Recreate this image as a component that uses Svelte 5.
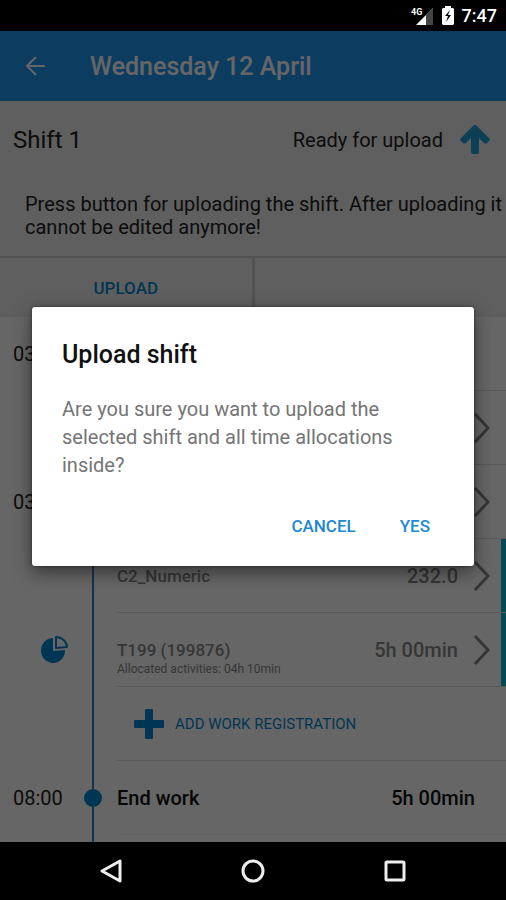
<script>
  let open = true;

  const rows = [
    { time: "03:00" },
    { chevron: true },
    { time: "03:00", chevron: true },
    { label: "C2_Numeric", value: "232.0", chevron: true, marked: true },
    {
      label: "T199 (199876)",
      note: "Allocated activities: 04h 10min",
      value: "5h 00min",
      chevron: true,
      marked: true,
      pie: true,
    },
    { add: true },
    { time: "08:00", label: "End work", value: "5h 00min", strong: true },
  ];

  function close() {
    open = false;
  }
</script>

<div class="device">
  <div class="status">
    <svg width="24" height="20" viewBox="0 0 24 20">
      <path d="M22 2v17H5z" fill="#fff" />
      <path d="M15 8l7-6v17h-7z" fill="#444" />
      <text x="0" y="9" font-size="9" font-weight="700" fill="#fff">4G</text>
    </svg>
    <svg class="battery" width="12" height="19" viewBox="0 0 12 19">
      <path d="M3 2V0h6v2h2l1 1v15l-1 1H1l-1-1V3l1-1z" fill="#fff" />
      <path d="M8 4l-5 6h3l-2 6 5-7H6z" fill="#000" />
    </svg>
    <span>7:47</span>
  </div>

  <div class="screen">
    <header>
      <button class="back" aria-label="Back">
        <svg width="20" height="20" viewBox="0 0 20 20">
          <path
            d="M20 10H2M11 1L2 10l9 9"
            fill="none"
            stroke="currentColor"
            stroke-width="2"
          />
        </svg>
      </button>
      <h1>Wednesday 12 April</h1>
    </header>

    <section class="shift">
      <div class="heading">
        <h2>Shift 1</h2>
        <span>Ready for upload</span>
        <svg width="30" height="30" viewBox="0 0 30 30">
          <path
            d="M15 0q1 0 2 1l12 12q2 2 0 3l-2 2q-1 1-3 0l-5-5v14q0 2-2 2h-4q-2 0-2-2V13l-5 5q-2 1-3 0l-2-2q-2-1 0-3L13 1q1-1 2-1z"
            fill="#1ea0d4"
          />
        </svg>
      </div>
      <p>
        Press button for uploading the shift. After uploading it cannot be
        edited anymore!
      </p>
      <div class="actions">
        <button class="upload">UPLOAD</button>
        <div class="empty"></div>
      </div>
    </section>

    <ul>
      {#each rows as row}
        <li class:marked={row.marked} class:strong={row.strong}>
          <div class="time">
            {#if row.time}{row.time}{/if}
            {#if row.pie}
              <svg width="28" height="28" viewBox="0 0 28 28">
                <path d="M13 2v13l12-1A12 12.500 0 1 1 13 2z" fill="#0288d1" />
                <path
                  d="M16 1v11l11-1A11 11 0 0 0 16 1z"
                  fill="none"
                  stroke="#0288d1"
                  stroke-width="2"
                  stroke-linejoin="round"
                />
              </svg>
            {/if}
          </div>
          <div class="track">
            {#if row.strong}<span class="dot"></span>{/if}
          </div>
          <div class="entry">
            {#if row.add}
              <button class="add">
                <svg width="30" height="30" viewBox="0 0 30 30">
                  <path
                    d="M12 0h6q1 0 1 1v10h10q1 0 1 1v6q0 1-1 1H19v10q0 1-1 1h-6q-1 0-1-1V19H1q-1 0-1-1v-6q0-1 1-1h10V1q0-1 1-1z"
                    fill="#0288d1"
                  />
                </svg>
                ADD WORK REGISTRATION
              </button>
            {:else}
              <div class="label">
                {row.label ?? ""}
                {#if row.note}<small>{row.note}</small>{/if}
              </div>
              <div class="value">{row.value ?? ""}</div>
              {#if row.chevron}
                <svg width="18" height="30" viewBox="0 0 18 30">
                  <path
                    d="M2 1l13 14L2 29"
                    fill="none"
                    stroke="#888"
                    stroke-width="3"
                  />
                </svg>
              {/if}
            {/if}
          </div>
        </li>
      {/each}
    </ul>

    {#if open}
      <div class="overlay">
        <div class="dialog" role="dialog" aria-labelledby="dialog-title">
          <h3 id="dialog-title">Upload shift</h3>
          <p>
            Are you sure you want to upload the selected shift and all time
            allocations inside?
          </p>
          <div class="buttons">
            <button on:click={close}>CANCEL</button>
            <button on:click={close}>YES</button>
          </div>
        </div>
      </div>
    {/if}
  </div>

  <nav>
    <button aria-label="Back">
      <svg width="24" height="24" viewBox="0 0 24 24">
        <path d="M21 2v20L3 12z" />
      </svg>
    </button>
    <button aria-label="Home">
      <svg width="24" height="24" viewBox="0 0 24 24">
        <circle cx="12" cy="12" r="10" />
      </svg>
    </button>
    <button aria-label="Recent apps">
      <svg width="24" height="24" viewBox="0 0 24 24">
        <rect x="3" y="3" width="18" height="18" rx="1" />
      </svg>
    </button>
  </nav>
</div>

<style>
  :global(body) {
    margin: 0;
    background: #000;
    font-family: Roboto, sans-serif;
  }

  h1,
  h2,
  h3,
  p,
  ul {
    margin: 0;
    padding: 0;
  }

  button {
    padding: 0;
    border: 0;
    background: none;
    font-family: inherit;
    cursor: pointer;
  }

  svg {
    display: block;
    flex: none;
  }

  .device {
    display: flex;
    flex-direction: column;
    min-height: 100vh;
  }

  .status {
    display: flex;
    align-items: center;
    justify-content: flex-end;
    height: 31px;
    padding-right: 9px;
    color: #fff;
    font-size: 18px;
    font-weight: 500;
  }

  .battery {
    margin: 0 8px 0 7px;
  }

  .screen {
    position: relative;
    flex: 1;
    display: flex;
    flex-direction: column;
    background: #fff;
  }

  header {
    display: flex;
    align-items: center;
    height: 70px;
    padding-left: 25px;
    background: #2196f3;
    color: #fff;
    box-shadow: 0 1px 3px rgba(0, 0, 0, 0.4);
  }

  .back {
    margin-right: 45px;
    color: inherit;
  }

  h1 {
    font-size: 25px;
    font-weight: 500;
  }

  .shift {
    background: #eee;
    color: #222;
  }

  .heading {
    display: flex;
    align-items: center;
    height: 78px;
    padding: 0 16px 0 13px;
    font-size: 20px;
  }

  h2 {
    flex: 1;
    font-size: 24px;
    font-weight: 400;
  }

  .heading svg {
    margin-left: 17px;
  }

  .shift p {
    padding: 14px 0 17px 25px;
    font-size: 20px;
    line-height: 23px;
  }

  .actions {
    display: flex;
    height: 59px;
    border-top: 2px solid #ccc;
  }

  .upload {
    flex: 1;
    color: #0288d1;
    font-size: 17px;
    font-weight: 500;
  }

  .empty {
    flex: 1;
    border-left: 3px solid #ccc;
  }

  ul {
    flex: 1;
    display: flex;
    flex-direction: column;
    list-style: none;
  }

  li {
    display: flex;
    height: 74px;
    color: #888;
    font-size: 20px;
    font-weight: 500;
  }

  .strong {
    flex: 1;
    color: #111;
  }

  .marked {
    box-shadow: inset -5px 0 #00bcd4;
  }

  .time {
    display: flex;
    align-items: center;
    box-sizing: border-box;
    width: 92px;
    height: 74px;
    padding-left: 13px;
    color: #222;
    font-weight: 400;
  }

  .time svg {
    margin-left: 27px;
  }

  .track {
    position: relative;
    width: 2px;
    background: #2f86c5;
  }

  .dot {
    position: absolute;
    top: 28px;
    left: -8px;
    width: 18px;
    height: 18px;
    border-radius: 50%;
    background: #0288d1;
  }

  .entry {
    flex: 1;
    display: flex;
    align-items: center;
    box-sizing: border-box;
    height: 74px;
    margin-left: 23px;
    padding-right: 15px;
    border-bottom: 1px solid #e0e0e0;
  }

  .strong .entry {
    padding-right: 31px;
    border-color: #f4f4f4;
  }

  .label {
    flex: 1;
    align-self: flex-start;
    padding-top: 25px;
    font-size: 17px;
    line-height: 24px;
  }

  .strong .label {
    font-size: 20px;
  }

  small {
    display: block;
    font-size: 12px;
    font-weight: 400;
    line-height: 14px;
  }

  .value + svg {
    margin-left: 15px;
  }

  .add {
    display: flex;
    align-items: center;
    gap: 11px;
    margin-left: 17px;
    color: #0288d1;
    font-size: 15px;
  }

  .overlay {
    position: absolute;
    inset: 0;
    display: flex;
    align-items: center;
    padding: 0 32px;
    background: rgba(0, 0, 0, 0.6);
  }

  .dialog {
    flex: 1;
    padding: 31px 22px 16px 30px;
    border-radius: 3px;
    background: #fff;
    box-shadow: 0 6px 18px rgba(0, 0, 0, 0.5), 0 0 3px rgba(0, 0, 0, 0.5);
  }

  h3 {
    color: #111;
    font-size: 25px;
    font-weight: 500;
    line-height: 34px;
  }

  .dialog p {
    margin: 23px 0;
    padding-right: 22px;
    color: #757575;
    font-size: 20px;
    line-height: 28px;
  }

  .buttons {
    display: flex;
    justify-content: flex-end;
  }

  .buttons button {
    height: 48px;
    padding: 0 22px;
    color: #1e88d2;
    font-size: 17px;
    font-weight: 500;
  }

  nav {
    display: flex;
    align-items: center;
    justify-content: center;
    gap: 118px;
    height: 58px;
  }

  nav svg {
    fill: none;
    stroke: #eee;
    stroke-width: 3;
    stroke-linejoin: round;
  }
</style>
